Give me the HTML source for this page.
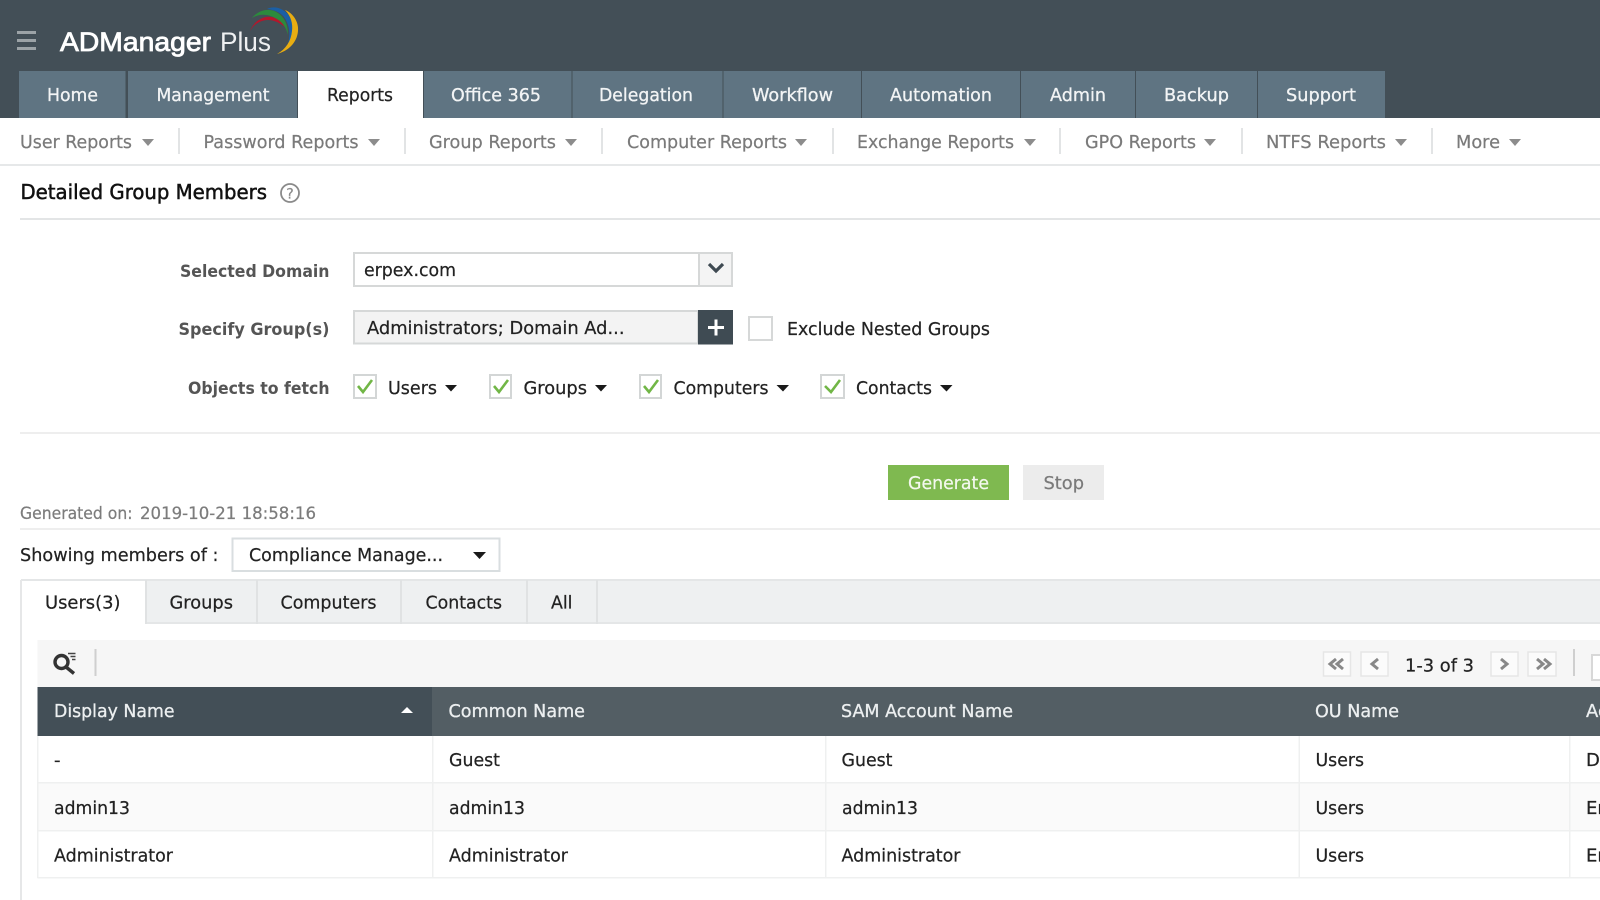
<!DOCTYPE html>
<html lang="en">
<head>
<meta charset="utf-8">
<title>ADManager Plus - Detailed Group Members</title>
<style>
html,body{margin:0;padding:0;width:1600px;height:900px;overflow:hidden;background:#fff}
svg{display:block;position:absolute;left:0;top:0;filter:blur(.35px)}
text{font-family:"DejaVu Sans","Liberation Sans",sans-serif;font-size:18px;fill:#222;stroke:#222;stroke-width:.22px}
.l{font-family:"Liberation Sans",sans-serif}
.t{fill:#f2f4f5;stroke:#f2f4f5;stroke-width:.3px}
.s{fill:#7a7a7a;stroke:#7a7a7a}
.b{font-weight:bold;fill:#555;stroke:none;font-size:16.5px}
.h{fill:#eceff0;stroke:#eceff0;stroke-width:.3px}
</style>
</head>
<body>
<svg width="1600" height="900" viewBox="0 0 1600 900" xmlns="http://www.w3.org/2000/svg">
<!-- header -->
<rect width="1600" height="118" fill="#434f57"/>
<g fill="#9ca3a7"><rect x="17" y="31" width="19" height="3"/><rect x="17" y="39" width="19" height="3"/><rect x="17" y="47" width="19" height="3"/></g>
<text class="l" x="60" y="51" textLength="151" lengthAdjust="spacingAndGlyphs" style="font-size:27px;fill:#fff;stroke:#fff;stroke-width:.8px">ADManager</text>
<text class="l" x="220" y="51" textLength="51" lengthAdjust="spacingAndGlyphs" style="font-size:27px;fill:#eef0f1;stroke:none">Plus</text>
<path d="M250 31C254 20 267 13 277 19C281 21 284 24 286 28C279 22 273 20 268 20C261 20 254 24 250 31Z" fill="#b3172c"/>
<path d="M252 18C258 10 270 7 278 13C284 17 288 24 288 35C286 27 282 22 277 19C269 14 260 13 252 18Z" fill="#2c8a3d"/>
<path d="M267 9C275 5 285 9 290 17C296 26 295 36 288 44C291 33 289 24 284 17C280 12 274 10 267 9Z" fill="#1a5fa6"/>
<path d="M277 54C288 51 297 43 298 31C299 22 293 13 285 10C291 16 293 24 292 31C291 41 286 49 277 54Z" fill="#e8ad12"/>

<!-- main tabs -->
<g fill="#5f7482">
<rect x="19" y="71" width="106.500" height="47"/><rect x="128" y="71" width="169" height="47"/>
<rect x="424" y="71" width="147.500" height="47"/><rect x="572.500" y="71" width="150" height="47"/>
<rect x="723.500" y="71" width="137.500" height="47"/><rect x="862" y="71" width="158" height="47"/>
<rect x="1021" y="71" width="114" height="47"/><rect x="1136" y="71" width="121" height="47"/>
<rect x="1258" y="71" width="127" height="47"/>
</g>
<rect x="298" y="71" width="125" height="47" fill="#fff"/>
<text class="t" x="47" y="101" textLength="51" lengthAdjust="spacingAndGlyphs">Home</text>
<text class="t" x="156.500" y="101" textLength="113" lengthAdjust="spacingAndGlyphs">Management</text>
<text x="327" y="101" textLength="66" lengthAdjust="spacingAndGlyphs">Reports</text>
<text class="t" x="451" y="101" textLength="90" lengthAdjust="spacingAndGlyphs">Office 365</text>
<text class="t" x="599" y="101" textLength="94" lengthAdjust="spacingAndGlyphs">Delegation</text>
<text class="t" x="752" y="101" textLength="81" lengthAdjust="spacingAndGlyphs">Workflow</text>
<text class="t" x="890" y="101" textLength="102" lengthAdjust="spacingAndGlyphs">Automation</text>
<text class="t" x="1050" y="101" textLength="56" lengthAdjust="spacingAndGlyphs">Admin</text>
<text class="t" x="1164" y="101" textLength="65" lengthAdjust="spacingAndGlyphs">Backup</text>
<text class="t" x="1286" y="101" textLength="70" lengthAdjust="spacingAndGlyphs">Support</text>

<!-- sub nav -->
<rect y="164" width="1600" height="2" fill="#e6e8e9"/>
<g>
<text class="s" x="20" y="148" textLength="112" lengthAdjust="spacingAndGlyphs">User Reports</text>
<text class="s" x="203.500" y="148" textLength="155" lengthAdjust="spacingAndGlyphs">Password Reports</text>
<text class="s" x="429" y="148" textLength="127" lengthAdjust="spacingAndGlyphs">Group Reports</text>
<text class="s" x="627" y="148" textLength="160" lengthAdjust="spacingAndGlyphs">Computer Reports</text>
<text class="s" x="857" y="148" textLength="157" lengthAdjust="spacingAndGlyphs">Exchange Reports</text>
<text class="s" x="1085" y="148" textLength="111" lengthAdjust="spacingAndGlyphs">GPO Reports</text>
<text class="s" x="1266" y="148" textLength="120" lengthAdjust="spacingAndGlyphs">NTFS Reports</text>
<text class="s" x="1456" y="148" textLength="44" lengthAdjust="spacingAndGlyphs">More</text>
</g>
<g fill="#8c8c8c">
<path d="M142 139h12l-6 7z"/><path d="M368 139h12l-6 7z"/><path d="M565 139h12l-6 7z"/><path d="M795 139h12l-6 7z"/>
<path d="M1024 139h12l-6 7z"/><path d="M1204 139h12l-6 7z"/><path d="M1395 139h12l-6 7z"/><path d="M1509 139h12l-6 7z"/>
</g>
<g fill="#e2e4e5">
<rect x="178" y="128" width="2" height="26"/><rect x="404" y="128" width="2" height="26"/><rect x="601" y="128" width="2" height="26"/>
<rect x="832" y="128" width="2" height="26"/><rect x="1059" y="128" width="2" height="26"/><rect x="1241" y="128" width="2" height="26"/><rect x="1431" y="128" width="2" height="26"/>
</g>

<!-- title -->
<text x="20.500" y="199" textLength="246.500" lengthAdjust="spacingAndGlyphs" style="font-size:20px;fill:#111;stroke:#111;stroke-width:.5px">Detailed Group Members</text>
<circle cx="290" cy="193" r="9" fill="none" stroke="#8a8a8a" stroke-width="1.800"/>
<text x="286.300" y="198.500" textLength="7.500" lengthAdjust="spacingAndGlyphs" style="font-size:14px;fill:#8a8a8a;stroke:#8a8a8a">?</text>
<rect x="20" y="218" width="1580" height="2" fill="#e3e5e6"/>

<!-- form -->
<text class="b" x="180" y="277" textLength="149.500" lengthAdjust="spacingAndGlyphs">Selected Domain</text>
<rect x="354" y="253" width="378" height="33" fill="#fff" stroke="#d6d8d8" stroke-width="2"/>
<rect x="699" y="254" width="32" height="31" fill="#f4f4f4"/>
<rect x="698" y="253" width="2" height="33" fill="#d6d8d8"/>
<text x="364" y="276" textLength="92" lengthAdjust="spacingAndGlyphs">erpex.com</text>
<path d="M709 264l7 7 7-7" fill="none" stroke="#3f4a52" stroke-width="3.200"/>

<text class="b" x="178.500" y="335" textLength="151" lengthAdjust="spacingAndGlyphs">Specify Group(s)</text>
<rect x="354" y="311" width="344" height="32.500" fill="#f3f3f3" stroke="#d6d8d8" stroke-width="2"/>
<text x="367" y="334" textLength="257.500" lengthAdjust="spacingAndGlyphs">Administrators; Domain Ad...</text>
<rect x="698" y="310" width="35" height="34.500" fill="#3f4b53"/>
<path d="M708 327.500h16M716 319.500v16" stroke="#fff" stroke-width="3" fill="none"/>
<rect x="749" y="317" width="23" height="23" fill="#fff" stroke="#d6d8d8" stroke-width="2"/>
<text x="787" y="335" textLength="203" lengthAdjust="spacingAndGlyphs">Exclude Nested Groups</text>

<text class="b" x="188" y="394" textLength="141.500" lengthAdjust="spacingAndGlyphs">Objects to fetch</text>
<g fill="#fff" stroke="#d3d6d6" stroke-width="2">
<rect x="354" y="375" width="22" height="23"/><rect x="490" y="375" width="21" height="23"/>
<rect x="640" y="375" width="21" height="23"/><rect x="821" y="375" width="23" height="23"/>
</g>
<g fill="none" stroke="#71b646" stroke-width="2.600">
<path d="M358 386l5 6 9-12"/><path d="M494 386l5 6 9-12"/><path d="M644 386l5 6 9-12"/><path d="M825 386l6 6 9-12"/>
</g>
<text x="388" y="394" textLength="49" lengthAdjust="spacingAndGlyphs">Users</text>
<text x="523.500" y="394" textLength="63.500" lengthAdjust="spacingAndGlyphs">Groups</text>
<text x="673.500" y="394" textLength="95" lengthAdjust="spacingAndGlyphs">Computers</text>
<text x="856" y="394" textLength="76" lengthAdjust="spacingAndGlyphs">Contacts</text>
<g fill="#1a1a1a">
<path d="M445 385h12l-6 6.500z"/><path d="M595 385h12l-6 6.500z"/><path d="M776.500 385h12.500l-6 6.500z"/><path d="M940 385h12.500l-6 6.500z"/>
</g>
<rect x="20" y="432" width="1580" height="2" fill="#eeeeee"/>

<!-- buttons -->
<rect x="888" y="465" width="121" height="35" fill="#7fb950"/>
<text x="908" y="489" textLength="81" lengthAdjust="spacingAndGlyphs" style="fill:#f3f8ee;stroke:#f3f8ee">Generate</text>
<rect x="1023" y="465" width="81" height="35" fill="#ececec"/>
<text x="1043.500" y="489" textLength="40.500" lengthAdjust="spacingAndGlyphs" style="fill:#7a7a7a;stroke:#7a7a7a">Stop</text>

<text x="20" y="519" textLength="112.500" lengthAdjust="spacingAndGlyphs" style="font-size:16.500px;fill:#7c7c7c;stroke:#7c7c7c">Generated on:</text>
<text x="140" y="519" textLength="176" lengthAdjust="spacingAndGlyphs" style="font-size:16.500px;fill:#7c7c7c;stroke:#7c7c7c">2019-10-21 18:58:16</text>
<rect x="20" y="528" width="1580" height="2" fill="#eeeeee"/>

<text x="20" y="561" textLength="198.500" lengthAdjust="spacingAndGlyphs">Showing members of :</text>
<rect x="232.500" y="538.500" width="267" height="32.500" fill="#fff" stroke="#d9dee0" stroke-width="2"/>
<text x="249" y="561" textLength="194" lengthAdjust="spacingAndGlyphs">Compliance Manage...</text>
<path d="M473 552h13l-6.500 7z" fill="#1a1a1a"/>

<!-- report tabs -->
<rect x="21" y="580" width="1579" height="43.500" fill="#eef0f1"/>
<rect x="21" y="579" width="1579" height="2" fill="#e4e6e7"/>
<rect x="21" y="622" width="1579" height="2" fill="#e4e6e7"/>
<rect x="21" y="581" width="124" height="44" fill="#fff"/>
<rect x="20" y="580" width="2" height="320" fill="#e6e7e8"/>
<g fill="#e0e2e3">
<rect x="145" y="580" width="2" height="44"/><rect x="256" y="580" width="2" height="44"/><rect x="400" y="580" width="2" height="44"/>
<rect x="526" y="580" width="2" height="44"/><rect x="596" y="580" width="2" height="44"/>
</g>
<text x="45" y="608.500" textLength="75.500" lengthAdjust="spacingAndGlyphs">Users(3)</text>
<text x="169.500" y="608.500" textLength="63.500" lengthAdjust="spacingAndGlyphs">Groups</text>
<text x="280.500" y="608.500" textLength="96" lengthAdjust="spacingAndGlyphs">Computers</text>
<text x="425.500" y="608.500" textLength="76.500" lengthAdjust="spacingAndGlyphs">Contacts</text>
<text x="551" y="608.500" textLength="21.500" lengthAdjust="spacingAndGlyphs">All</text>

<!-- toolbar -->
<rect x="37.500" y="640" width="1562.500" height="47" fill="#f6f6f6"/>
<circle cx="61.500" cy="662" r="6.500" fill="none" stroke="#333" stroke-width="3.400"/>
<path d="M66 667l8 6.500" stroke="#333" stroke-width="3.400" fill="none"/>
<path d="M68 653.500h7.500M70.500 656.500h5M72 659.500h3.500" stroke="#444" stroke-width="1.500" fill="none"/>
<rect x="94.500" y="649" width="2" height="27" fill="#cfcfcf"/>
<g fill="#fbfbfb" stroke="#e6e6e6" stroke-width="1.500">
<rect x="1323.500" y="652" width="27" height="24"/><rect x="1361" y="652" width="27" height="24"/>
<rect x="1491" y="652" width="27" height="24"/><rect x="1528" y="652" width="28" height="24"/>
</g>
<g fill="none" stroke="#888" stroke-width="3">
<path d="M1336 659l-6 5 6 5M1343 659l-6 5 6 5"/><path d="M1378 659l-6 5 6 5"/>
<path d="M1501 659l6 5-6 5"/><path d="M1537 659l6 5-6 5M1544 659l6 5-6 5"/>
</g>
<text x="1405" y="671.500" textLength="69" lengthAdjust="spacingAndGlyphs">1-3 of 3</text>
<rect x="1573" y="649" width="2" height="27" fill="#cfcfcf"/>
<rect x="1592" y="655" width="30" height="25" fill="#fff" stroke="#d8d8d8" stroke-width="2"/>

<!-- table header -->
<rect x="37.500" y="687" width="1562.500" height="49" fill="#535e64"/>
<rect x="37.500" y="687" width="394.500" height="49" fill="#434f57"/>
<text class="h" x="54" y="717" textLength="120.500" lengthAdjust="spacingAndGlyphs">Display Name</text>
<path d="M401 713l6-6 6 6z" fill="#fff"/>
<text class="h" x="448.500" y="717" textLength="136.500" lengthAdjust="spacingAndGlyphs">Common Name</text>
<text class="h" x="841" y="717" textLength="172" lengthAdjust="spacingAndGlyphs">SAM Account Name</text>
<text class="h" x="1315" y="717" textLength="84" lengthAdjust="spacingAndGlyphs">OU Name</text>
<text class="h" x="1586" y="717">Account Status</text>

<!-- rows -->
<rect x="37.500" y="783" width="1562.500" height="47" fill="#fafafa"/>
<g fill="#eff0f0">
<rect x="37.500" y="782" width="1562.500" height="1.500"/><rect x="37.500" y="830" width="1562.500" height="1.500"/><rect x="37.500" y="877" width="1562.500" height="1.500"/>
<rect x="37" y="736" width="1.500" height="142"/><rect x="432" y="736" width="1.500" height="142"/><rect x="825" y="736" width="1.500" height="142"/>
<rect x="1298.500" y="736" width="1.500" height="142"/><rect x="1569" y="736" width="1.500" height="142"/>
</g>
<text x="54" y="766">-</text>
<text x="449" y="766" textLength="51" lengthAdjust="spacingAndGlyphs">Guest</text>
<text x="841.500" y="766" textLength="51" lengthAdjust="spacingAndGlyphs">Guest</text>
<text x="1315.500" y="766" textLength="48.500" lengthAdjust="spacingAndGlyphs">Users</text>
<text x="1586" y="766">Disabled</text>
<text x="54" y="814" textLength="76" lengthAdjust="spacingAndGlyphs">admin13</text>
<text x="449" y="814" textLength="76" lengthAdjust="spacingAndGlyphs">admin13</text>
<text x="842" y="814" textLength="76" lengthAdjust="spacingAndGlyphs">admin13</text>
<text x="1315.500" y="814" textLength="48.500" lengthAdjust="spacingAndGlyphs">Users</text>
<text x="1586" y="814">Enabled</text>
<text x="54" y="861.500" textLength="119" lengthAdjust="spacingAndGlyphs">Administrator</text>
<text x="449" y="861.500" textLength="119" lengthAdjust="spacingAndGlyphs">Administrator</text>
<text x="841.500" y="861.500" textLength="119" lengthAdjust="spacingAndGlyphs">Administrator</text>
<text x="1315.500" y="861.500" textLength="48.500" lengthAdjust="spacingAndGlyphs">Users</text>
<text x="1586" y="861.500">Enabled</text>
</svg>
</body>
</html>
